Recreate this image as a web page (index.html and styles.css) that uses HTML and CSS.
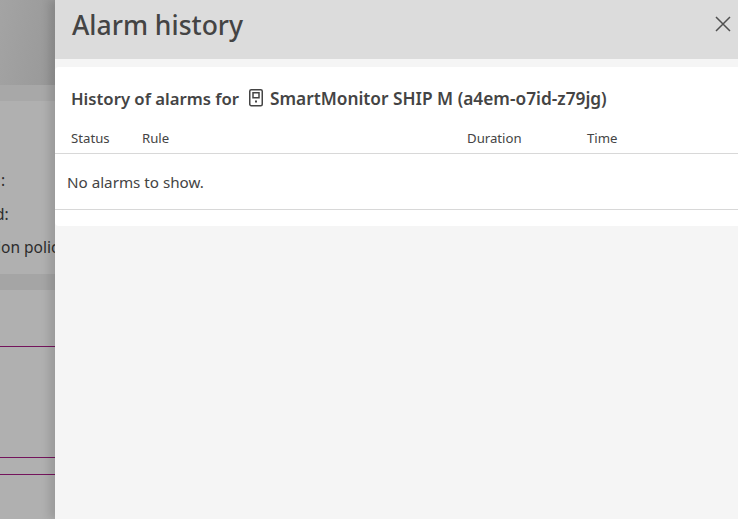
FILE: index.html
```html
<!DOCTYPE html>
<html lang="en">
<head>
    <meta charset="UTF-8">
    <meta name="viewport" content="width=device-width, initial-scale=1.0">
    <title>Alarm history</title>
    <link rel="stylesheet" href="styles.css">
</head>
<body>
    <div class="backdrop">
        <div class="backdrop-head"></div>
        <div class="backdrop-fields">
            <div class="field">:</div>
            <div class="field">d:</div>
            <div class="field">ion policy</div>
        </div>
        <div class="backdrop-band"></div>
        <div class="backdrop-rule rule-a"></div>
        <div class="backdrop-rule rule-b"></div>
        <div class="backdrop-rule rule-c"></div>
    </div>

    <div class="panel">
        <div class="panel-header">
            <h1>Alarm history</h1>
            <button class="close-btn" aria-label="Close">
                <svg width="16" height="16" viewBox="0 0 16 16"><path d="M1 1 15 15M15 1 1 15" stroke="#505050" stroke-width="1.5" fill="none"/></svg>
            </button>
        </div>
        <div class="card">
            <h2>
                <span class="card-title">History of alarms for</span>
                <svg class="device-icon" width="16" height="18" viewBox="0 0 16 18"><rect x="1.75" y="0.75" width="12.5" height="16" rx="1.5" fill="none" stroke="#444" stroke-width="1.5"/><rect x="5" y="3.75" width="6" height="5" fill="none" stroke="#444" stroke-width="1.5"/><rect x="7" y="11.5" width="2" height="2" fill="#444"/></svg>
                <span class="device-name">SmartMonitor SHIP M (a4em-o7id-z79jg)</span>
            </h2>
            <div class="table-head">
                <span>Status</span>
                <span>Rule</span>
                <span>Duration</span>
                <span>Time</span>
            </div>
            <div class="empty-row">No alarms to show.</div>
        </div>
    </div>
</body>
</html>
```

FILE: styles.css
```css
html, body {
    height: 100%;
}

body {
    margin: 0;
    overflow: hidden;
    display: flex;
    font-family: "Noto Sans", Arial, sans-serif;
    color: #444;
    background: #f5f5f5;
}

.backdrop {
    width: 55px;
    flex-shrink: 0;
    overflow: hidden;
    background: #b0b0b0;
    color: #2c2c2c;
}

.backdrop-head {
    height: 85px;
    background: linear-gradient(100deg, #a4a4a4, #989898);
    border-bottom: 16px solid #a8a8a8;
}

.backdrop-fields {
    padding-top: 68px;
    height: 105px;
    font-size: 15.5px;
    white-space: nowrap;
}

.field {
    height: 33.5px;
    line-height: 22px;
    margin-left: -3px;
}

.field:nth-child(1) {
    margin-left: 1px;
}

.field:nth-child(2) {
    margin-left: -5px;
}

.backdrop-band {
    height: 16px;
    background: #a5a5a5;
}

.backdrop-rule {
    height: 1px;
    background: #74145c;
}

.rule-a {
    margin-top: 56px;
}

.rule-b {
    margin-top: 110px;
}

.rule-c {
    margin-top: 16px;
}

.panel {
    flex: 1;
    min-width: 0;
    position: relative;
    box-shadow: -6px 0 8px rgba(0, 0, 0, 0.12);
}

.panel-header {
    height: 59px;
    background: #dcdcdc;
    display: flex;
    align-items: center;
    justify-content: space-between;
    padding: 0 7px 9px 17px;
    box-sizing: border-box;
}

h1 {
    margin: 0;
    font-size: 26.5px;
    font-weight: 500;
    color: #444;
}

.close-btn {
    border: 0;
    padding: 0;
    background: none;
    display: flex;
    margin-top: -3px;
}

.card {
    margin-top: 8px;
    height: 159px;
    background: #fff;
    border-radius: 4px 0 0 4px;
}

h2 {
    margin: 0;
    padding: 21px 0 0 16px;
    height: 42px;
    font-size: 16.7px;
    line-height: 22px;
    font-weight: 600;
    display: flex;
    align-items: flex-start;
    gap: 6px;
}

.card-title {
    width: 170px;
    white-space: nowrap;
}

.device-name {
    font-size: 17.3px;
    white-space: nowrap;
}

.device-icon {
    margin: 1px 0 0 1px;
}

.table-head {
    display: grid;
    grid-template-columns: 71px 325px 120px 1fr;
    padding-left: 16px;
    height: 23px;
    font-size: 13.2px;
    line-height: 17px;
    border-bottom: 1px solid #d8d8d8;
}

.empty-row {
    height: 55px;
    padding-left: 12px;
    font-size: 15.2px;
    line-height: 57px;
    border-bottom: 1px solid #d8d8d8;
}
```
